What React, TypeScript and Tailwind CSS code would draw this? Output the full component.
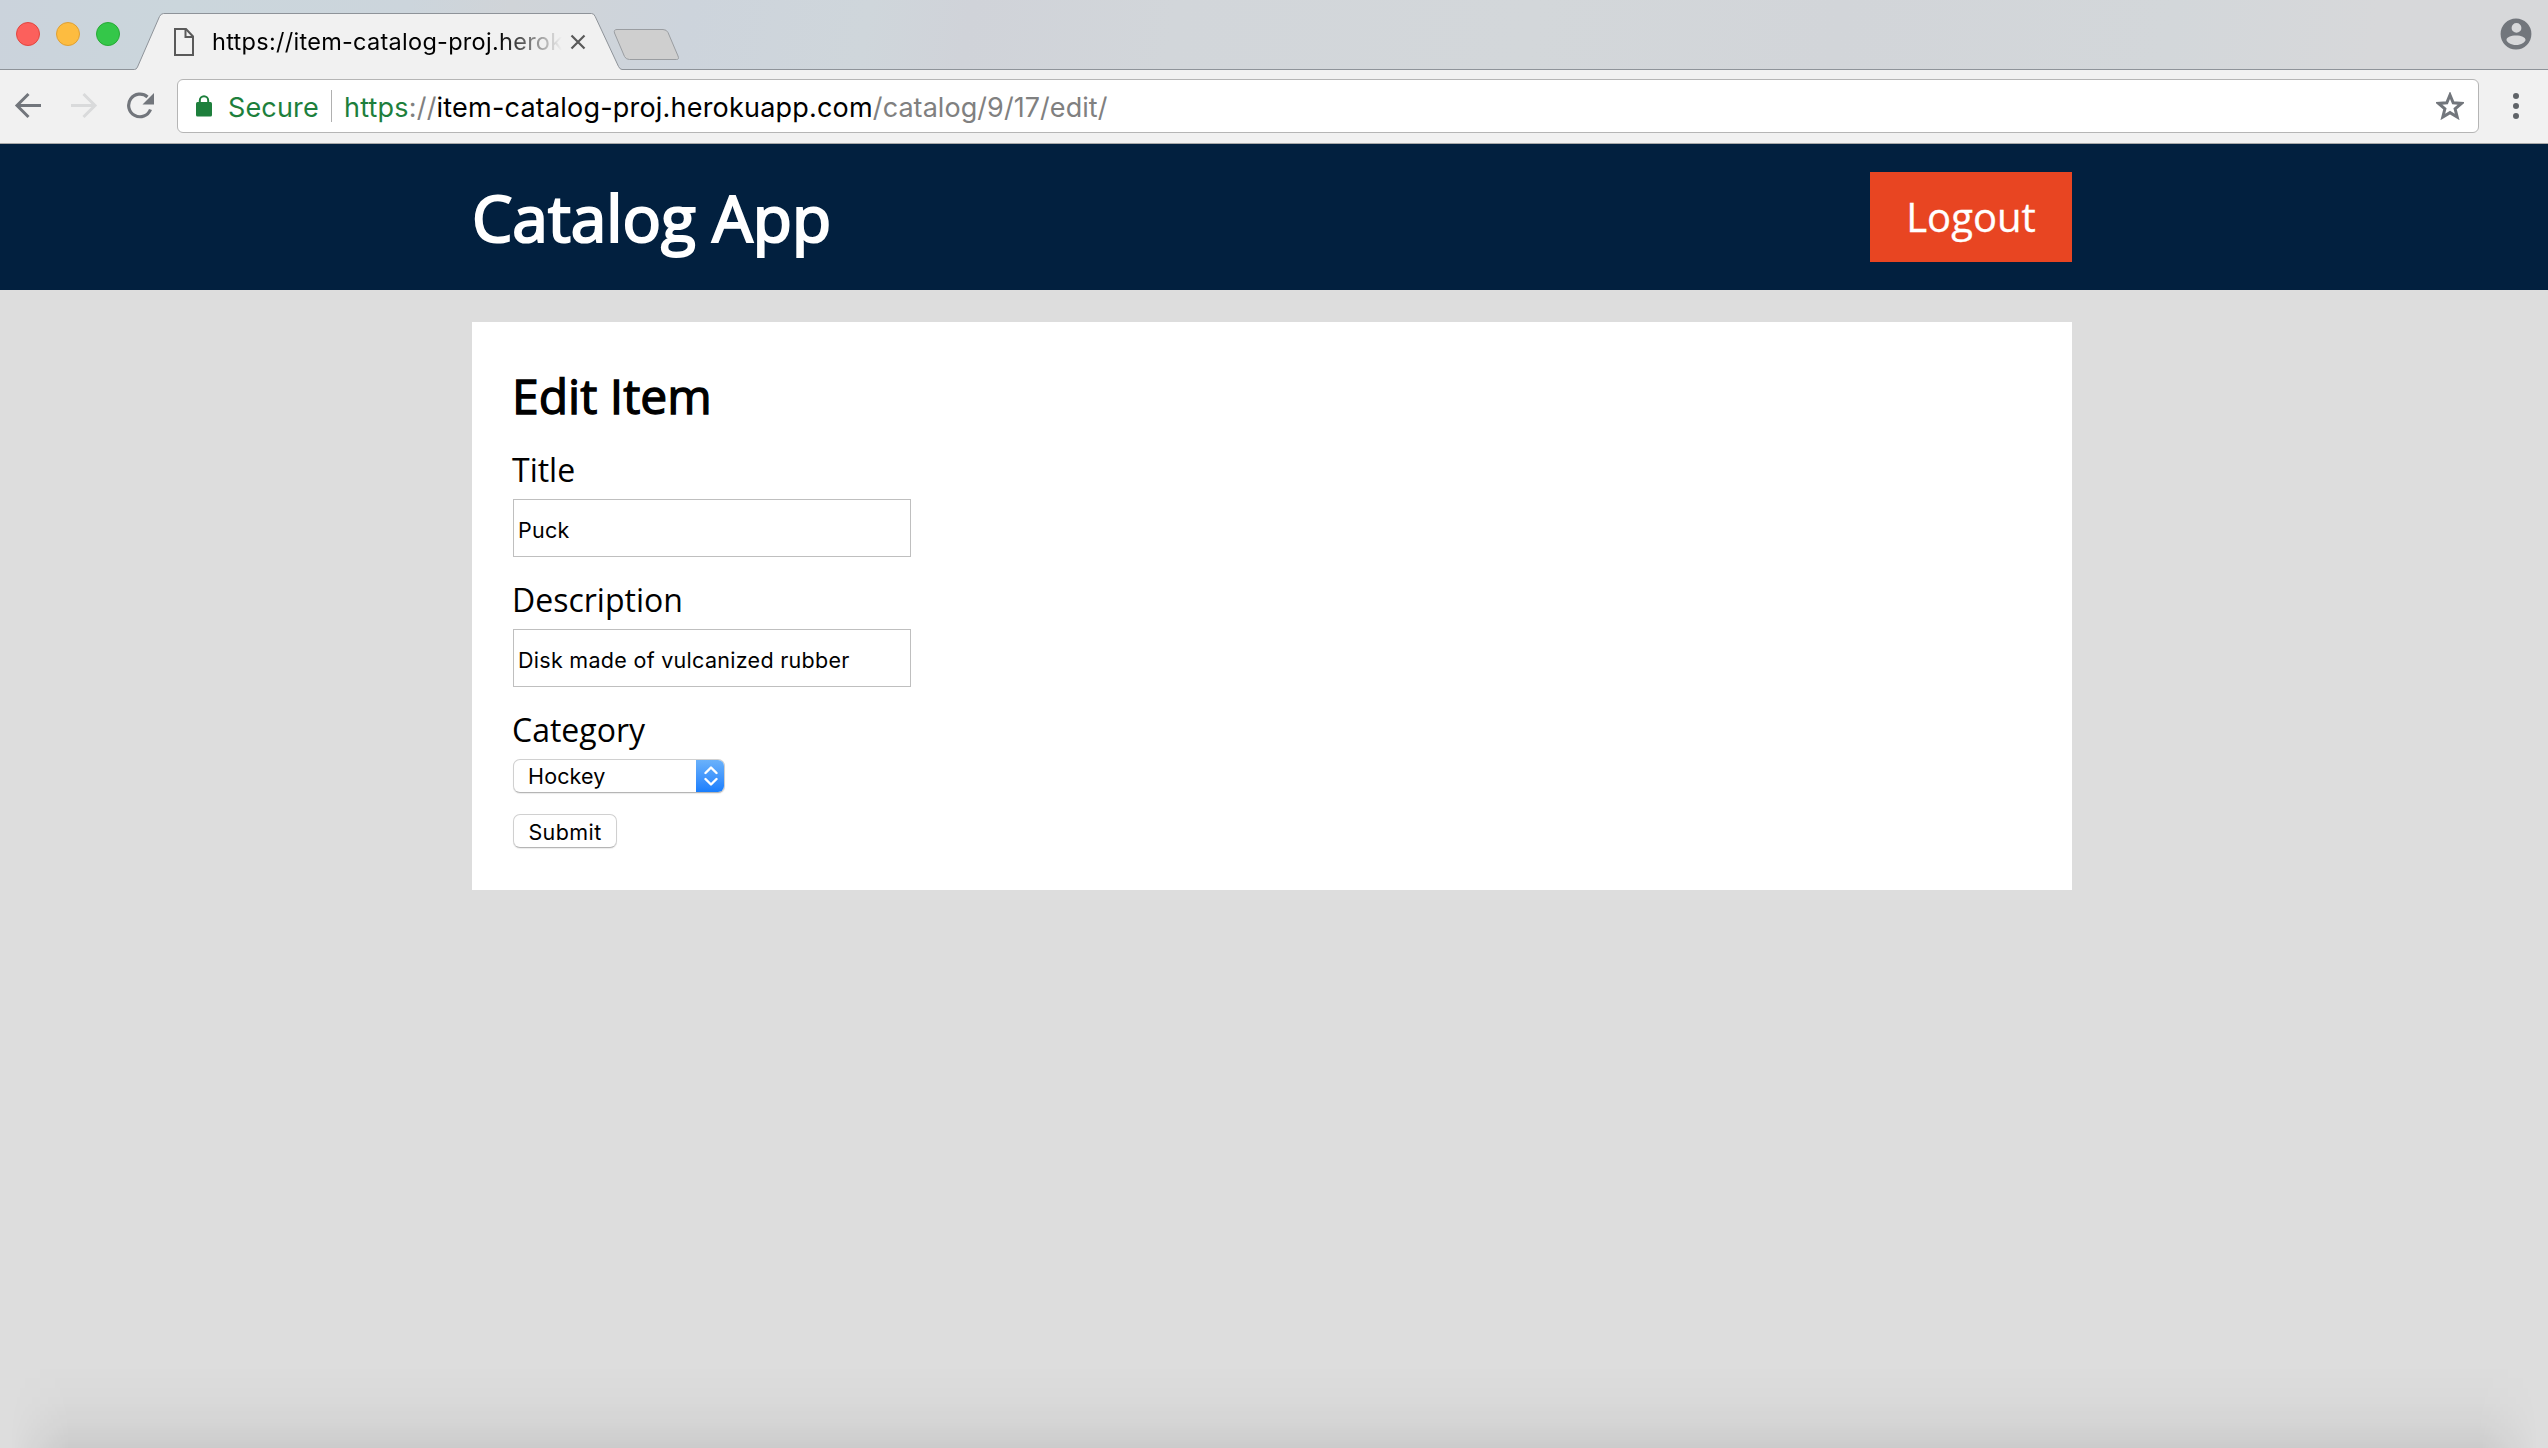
function TabStrip() {
  return (
    <div className="relative flex h-[70px] items-start bg-[linear-gradient(100deg,#cbd3dc_0%,#cbd6dc_7%,#ccd5dc_16%,#d0d4d8_20%,#cdd4dc_27%,#cfd6db_34%,#d0d3d9_38%,#d2d6da_46%,#d3d7da_60%,#d2d5d9_72%,#d3d7da_85%,#d7d8da_93%,#d7d8da_100%)]">
      {/* Tab outlines sit behind the tab's own contents */}
      <svg className="absolute inset-0 h-[70px] w-full" aria-hidden="true">
        <path d="M0 69.5H134.5Q136.5 69.5 137.5 67L159.5 16.5Q161 13.5 163.5 13.5H591.5Q594 13.5 595.2 16.5L618.5 66.5Q620 69.5 622 69.5H2548V71H0Z" fill="#f1f1f1" stroke="none" />
        <path d="M0 69.5H134.5Q136.5 69.5 137.5 67L159.5 16.5Q161 13.5 163.5 13.5H591.5Q594 13.5 595.2 16.5L618.5 66.5Q620 69.5 622 69.5H2548" fill="none" stroke="#8e9399" strokeWidth="1" />
        <path d="M617 29.5H663Q666.5 29.5 668 32.5L678 56Q679.5 59.5 676.5 59.5H629.5Q626 59.5 624.5 56.5L614.5 33Q613.5 29.5 617 29.5Z" fill="#cfcfcf" stroke="#9a9da1" strokeWidth="1" />
      </svg>
      <div className="relative ml-4 mt-[22px] flex gap-4">
        <span className="size-6 rounded-full border border-[#e2463f] bg-[#fc605c]" />
        <span className="size-6 rounded-full border border-[#dfa034] bg-[#fdbc40]" />
        <span className="size-6 rounded-full border border-[#27aa35] bg-[#34c749]" />
      </div>
      <svg className="relative ml-[54px] mt-[28px] h-7 w-5" viewBox="0 0 20 28" fill="none" stroke="#5a5a5a" strokeWidth="2" aria-hidden="true">
        <path d="M1 1H12L19 8.5V27H1Z" />
        <path d="M11.5 1V9H19" />
      </svg>
      <div className="relative ml-[18px] mt-[26px] h-8 w-[352px] whitespace-nowrap text-[23.5px] leading-8 tracking-[0.28px] text-black [mask-image:linear-gradient(to_right,black_287px,transparent_350px)]">
        https://item-catalog-proj.herok
      </div>
      <svg className="relative ml-[6px] mt-[34px] size-4" viewBox="0 0 16 16" stroke="#5a5a5a" strokeWidth="2.2" aria-hidden="true">
        <path d="M1.5 1.5L14.5 14.5M14.5 1.5L1.5 14.5" />
      </svg>
      <svg className="relative mr-4 ml-auto mt-[18px] size-8" viewBox="0 0 32 32" aria-hidden="true">
        <path fillRule="evenodd" fill="#72767c" d="M16 .6a15.400 15.400 0 1 0 0 30.800a15.400 15.400 0 1 0 0-30.800ZM16.500 5a4.900 4.900 0 1 1 0 9.800a4.900 4.900 0 1 1 0-9.800ZM16 17.500c5.500 0 9.500 2 9.500 4.200c0 2.300-4.500 5.300-9.500 5.300s-9.500-3-9.500-5.300c0-2.200 4-4.200 9.500-4.200Z" />
      </svg>
    </div>
  );
}

function Toolbar() {
  return (
    <div className="flex h-[74px] items-start border-b border-[#a9a9a9] bg-[#f1f1f1]">
      <svg className="ml-[14px] mt-[22px] h-7 w-7" viewBox="0 0 28 28" fill="none" stroke="#72767c" strokeWidth="3" aria-hidden="true">
        <path d="M27 13.5H3.5M14.5 2L3 13.5L14.5 25" />
      </svg>
      <svg className="ml-[28px] mt-[22px] h-7 w-7" viewBox="0 0 28 28" fill="none" stroke="#d9dadb" strokeWidth="3" aria-hidden="true">
        <path d="M1 13.5H24.5M13.5 2L25 13.5L13.5 25" />
      </svg>
      <svg className="ml-[28px] mt-[22px] h-7 w-7" viewBox="0 0 28 28" aria-hidden="true">
        <path d="M21.5 5A11.3 11.3 0 1 0 24.5 17.5" fill="none" stroke="#72767c" strokeWidth="3.2" />
        <path d="M28 1V12.5H16.5Z" fill="#72767c" />
      </svg>
      <div className="ml-[23px] mt-[9px] flex h-[54px] w-[2302px] items-center rounded-[6px] border border-[#b5b5b5] bg-white pl-[18px] pr-[14px]">
        <svg className="h-[22px] w-4" viewBox="0 0 16 22" aria-hidden="true">
          <rect x="0" y="7" width="16" height="14.5" rx="1.5" fill="#1d7f3c" />
          <path d="M3.800 8V5.500a4.200 4.200 0 0 1 8.400 0V8" fill="none" stroke="#1d7f3c" strokeWidth="2" />
        </svg>
        <span className="ml-4 w-[90px] whitespace-nowrap pt-[3px] text-[27px] leading-8 tracking-[0.15px] text-[#1d7f3c]">Secure</span>
        <span className="ml-[13px] h-8 w-px bg-[#b0b0b0]" />
        <span className="ml-[12px] whitespace-nowrap pt-[3px] text-[27px] leading-8">
          <span className="tracking-[0.2px] text-[#1d7f3c]">https</span>
          <span className="tracking-[0.2px] text-[#808080]">://</span>
          <span className="tracking-[0.2px] text-black">item-catalog-proj.herokuapp.com</span>
          <span className="tracking-[0.06px] text-[#808080]">/catalog/9/17/edit/</span>
        </span>
        <svg className="ml-auto size-[28px]" viewBox="0 0 28 28" fill="none" stroke="#72767c" strokeWidth="3" aria-hidden="true">
          <path d="M14 3L17.2 10.8L25.5 11.4L19.1 16.8L21.2 25L14 20.6L6.8 25L8.9 16.8L2.5 11.4L10.8 10.8Z" />
        </svg>
      </div>
      <div className="ml-[34px] mt-[23px] flex flex-col gap-1">
        <span className="size-1.5 rounded-full bg-[#5f6368]" />
        <span className="size-1.5 rounded-full bg-[#5f6368]" />
        <span className="size-1.5 rounded-full bg-[#5f6368]" />
      </div>
    </div>
  );
}

function TextField({ label, value }: { label: string; value: string }) {
  return (
    <label className="mb-[21px] flex flex-col">
      <span className="text-[32px] leading-[44px]">{label}</span>
      <input
        defaultValue={value}
        className="ml-px mt-[7px] h-[58px] w-[398px] border border-[#bfbfbf] bg-white px-[4px] pt-[4px] font-['Inter',sans-serif] text-[21.5px] leading-7 tracking-[0.29px] text-black outline-none"
      />
    </label>
  );
}

export default function App() {
  return (
    <div className="flex h-[1448px] w-[2548px] flex-col overflow-hidden bg-[#dddddd] font-['Inter',sans-serif]">
      <TabStrip />
      <Toolbar />
      <div className="relative flex flex-1 flex-col font-['Open_Sans',sans-serif] text-black">
        <header className="h-[146px] bg-[#02203f]">
          <div className="mx-auto flex h-full w-[1600px] -translate-x-[2px] items-center justify-between">
            <h1 className="pt-[2px] text-[64px] leading-[88px] text-white [-webkit-text-stroke:2.2px_white]">Catalog App</h1>
            <button className="h-[90px] w-[202px] bg-[#e84522] text-[40px] leading-[54px] text-white [-webkit-text-stroke:0.3px_white]">Logout</button>
          </div>
        </header>
        <main className="mx-auto mt-8 h-[568px] w-[1600px] -translate-x-[2px] bg-white px-10 pt-[41px]">
          <h2 className="mb-[19px] text-[48px] leading-[66px] [-webkit-text-stroke:1.3px_black]">Edit Item</h2>
          <TextField label="Title" value="Puck" />
          <TextField label="Description" value="Disk made of vulcanized rubber" />
          <div className="text-[32px] leading-[44px]">Category</div>
          <div className="ml-px mt-[7px] flex h-[34px] w-[212px] overflow-hidden rounded-[7px] border border-[#d0d0d0] border-b-[#b5b5b5] bg-white font-['Inter',sans-serif] text-[21.5px] leading-8 tracking-[0.15px] shadow-[0_1px_1px_rgba(0,0,0,0.08)]">
            <span className="flex-1 pl-[14px]">Hockey</span>
            <span className="-my-px -mr-px flex w-[29px] items-center justify-center bg-linear-to-b from-[#6cb3fa] to-[#147cfd]">
              <svg className="h-5 w-[14px]" viewBox="0 0 14 20" fill="none" stroke="white" strokeWidth="2.4" strokeLinecap="round" strokeLinejoin="round" aria-hidden="true">
                <path d="M1.5 7L7 1.5L12.5 7M1.5 13L7 18.5L12.5 13" />
              </svg>
            </span>
          </div>
          <button className="ml-px mt-[21px] block h-[34px] w-[104px] rounded-[7px] border border-[#d0d0d0] border-b-[#b5b5b5] bg-white pt-[2px] text-center font-['Inter',sans-serif] text-[21.5px] leading-[30px] tracking-[0.4px] shadow-[0_1px_1px_rgba(0,0,0,0.08)]">
            Submit
          </button>
        </main>
        {/* Soft shade rising from the window's lower edge */}
        <div className="pointer-events-none absolute inset-x-0 bottom-0 h-[84px] bg-[linear-gradient(to_top,rgba(0,0,0,0.078),rgba(0,0,0,0.04)_28%,rgba(0,0,0,0.014)_55%,transparent)] [mask-image:linear-gradient(to_right,transparent_10px,black_70px,black_calc(100%-70px),transparent_calc(100%-10px))]" />
      </div>
    </div>
  );
}
